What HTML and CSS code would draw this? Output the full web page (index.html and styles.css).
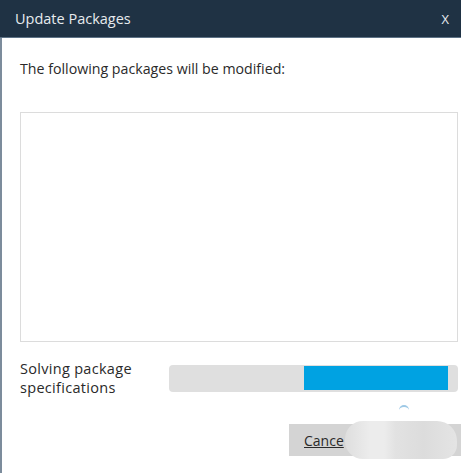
FILE: index.html
```html
<!DOCTYPE html>
<html lang="en">
<head>
    <meta charset="UTF-8">
    <meta name="viewport" content="width=device-width, initial-scale=1.0">
    <title>Update Packages</title>
    <link rel="stylesheet" href="styles.css">
</head>
<body>
    <div class="dialog">
        <div class="titlebar">
            <span class="title">Update Packages</span>
            <span class="close">X</span>
        </div>
        <div class="content">
            <p class="intro">The following packages will be modified:</p>
            <div class="package-list"></div>

            <div class="status-row">
                <div class="status-text">Solving package<br>specifications</div>
                <div class="progress">
                    <div class="progress-fill"></div>
                </div>
            </div>
            <div class="spinner-mark"></div>

            <div class="actions">
                <button type="button" class="cancel-button">
                    <span class="cancel-label">Cance</span>
                    <span class="smudge"></span>
                </button>
            </div>
        </div>
    </div>
</body>
</html>
```

FILE: styles.css
```css
body {
    margin: 0;
    padding: 0;
    font-family: "Open Sans", "Noto Sans", sans-serif;
    background-color: #ffffff;
    color: #2b2b2b;
}

.dialog {
    width: 461px;
    height: 473px;
    display: flex;
    flex-direction: column;
    overflow: hidden;
}

.titlebar {
    height: 37px;
    background-color: #1f3244;
    border-bottom: 1px solid #5d7286;
    display: flex;
    align-items: center;
    justify-content: space-between;
    padding: 0 12px 0 15px;
    color: #e6ebef;
    font-size: 14.5px;
}

.close {
    font-size: 13px;
}

.content {
    flex: 1;
    border-left: 2px solid #7c8c9c;
    padding: 0 3px 0 18px;
    display: flex;
    flex-direction: column;
}

.intro {
    margin: 22px 0 0;
    font-size: 14.2px;
    line-height: 18px;
    color: #2a2a2a;
}

.package-list {
    height: 228px;
    margin-top: 34px;
    border: 1px solid #dcdcdc;
    background-color: #ffffff;
}

.status-row {
    display: flex;
    align-items: center;
    margin-top: 17px;
}

.status-text {
    width: 149px;
    font-size: 14.5px;
    line-height: 19px;
    letter-spacing: 0.3px;
    color: #2a2a2a;
}

.progress {
    flex: 1;
    height: 27px;
    background-color: #dfdfdf;
    border-radius: 4px;
    display: flex;
    align-items: center;
    justify-content: flex-end;
    padding-right: 10px;
}

.progress-fill {
    width: 144px;
    height: 24px;
    background-color: #00a2e2;
}

.spinner-mark {
    align-self: flex-end;
    width: 10px;
    height: 3px;
    margin: 8px 49px 0 0;
    border-top: 2px solid #9ec9e6;
    border-radius: 6px 6px 0 0;
}

.actions {
    display: flex;
    justify-content: flex-end;
    margin-top: 14px;
}

.cancel-button {
    position: relative;
    width: 172px;
    height: 32px;
    border: none;
    border-radius: 0;
    margin-right: -3px;
    background-color: #d4d4d4;
    text-align: left;
    padding: 0 0 0 15px;
    font-family: inherit;
    font-size: 14px;
    color: #2a2a2a;
}

.cancel-label {
    text-decoration: underline;
}

.smudge {
    position: absolute;
    left: 56px;
    top: -3px;
    width: 112px;
    height: 38px;
    background: linear-gradient(90deg, #dedede 0, #ececec 22%, #ececec 35%, #e2e2e2 45%, #dcdcdc 70%, #e4e4e4 100%);
    border-radius: 18px 20px 14px 18px;
}
```
